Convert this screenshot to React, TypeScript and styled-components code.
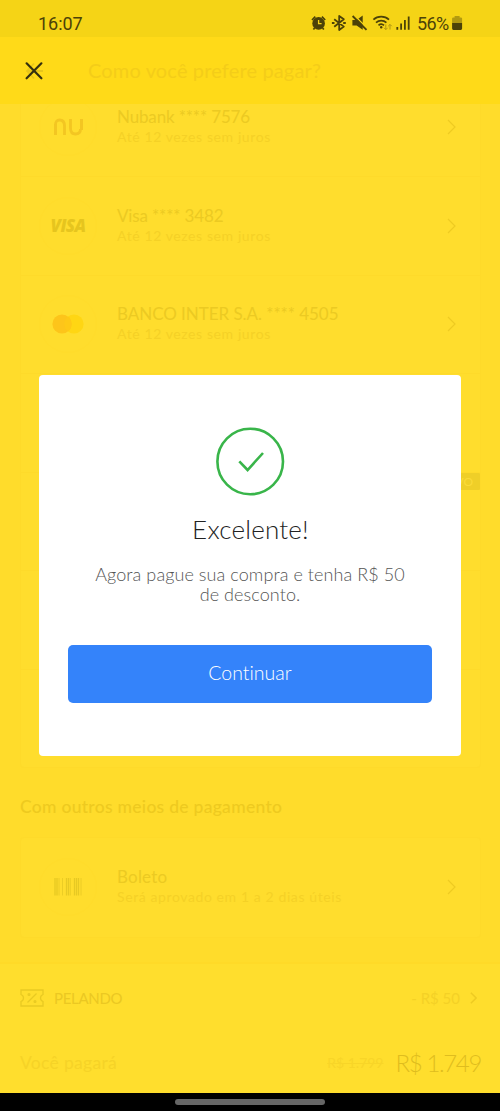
import React from 'react';
import styled, { createGlobalStyle } from 'styled-components';

const GlobalStyle = createGlobalStyle`
  * { box-sizing: border-box; }
  body { margin: 0; background: #000; font-family: Lato, "Liberation Sans", sans-serif; font-variant-ligatures: none; }
  h1, h2, p { margin: 0; font-weight: 400; }
  svg { display: block; flex: none; }
`;

const Screen = styled.div`
  position: relative;
  width: 500px;
  height: 1111px;
  display: flex;
  flex-direction: column;
  overflow: hidden;
  background: #ffdc2b;
`;

const StatusBar = styled.header`
  flex: none;
  height: 37px;
  padding: 9px 37px 0 38px;
  display: flex;
  justify-content: space-between;
  align-items: center;
  background: #f5d416;
  color: #4c4208;
  font-family: Roboto, sans-serif;
`;

const Clock = styled.span`
  font-size: 18px;
  line-height: 28px;
  padding-top: 1px;
  letter-spacing: -0.05px;
`;

const StatusIcons = styled.div`
  display: flex;
  align-items: center;
  height: 28px;
`;

const Percent = styled.span`
  width: 34px;
  margin-right: 1px;
  padding-top: 1px;
  font-size: 18px;
  line-height: 28px;
  letter-spacing: -0.6px;
`;

const TitleBar = styled.div`
  flex: none;
  height: 67px;
  padding-left: 25px;
  display: flex;
  align-items: center;
  gap: 44px;
  background: #ffda18;
`;

const PageTitle = styled.h1`
  padding-bottom: 2px;
  font-size: 20px;
  line-height: 26px;
  font-weight: 400;
  letter-spacing: 0.15px;
  color: #f4cd18;
`;

const Content = styled.main`
  flex: none;
  height: 858px;
  padding: 0 19px 0 20px;
  overflow: hidden;
`;

const Card = styled.section<{ $offset?: number }>`
  margin-top: ${(p) => p.$offset ?? 0}px;
  border: 1px solid #feda2a;
  border-radius: 4px;
  background: #ffdd2d;
`;

const Row = styled.div`
  position: relative;
  height: 98.5px;
  padding: 0 24px 0 18px;
  display: flex;
  align-items: center;
  & + & { border-top: 1px solid #feda2a; }
`;

const Logo = styled.div`
  width: 58px;
  height: 58px;
  margin-right: 20px;
  flex: none;
  display: flex;
  align-items: center;
  justify-content: center;
  border: 1px solid #ffdc2b;
  border-radius: 50%;
`;

const VisaMark = styled.span`
  font: italic 800 17px/20px "Open Sans", sans-serif;
  letter-spacing: -0.6px;
  color: #e6c51e;
`;

const RowText = styled.div`
  flex: 1;
  white-space: nowrap;
`;

const RowTitle = styled.p<{ $track?: number }>`
  font-size: 17px;
  line-height: 20px;
  letter-spacing: ${(p) => p.$track ?? -0.15}px;
  color: #ecca22;
`;

const RowNote = styled.p`
  font-size: 14px;
  line-height: 20px;
  letter-spacing: 0.6px;
  color: #f5d126;
`;

const Badge = styled.span`
  position: absolute;
  top: 0;
  right: 0;
  height: 17px;
  padding: 0 7px;
  border-radius: 1px;
  background: #efcf28;
  color: #fbdb38;
  font-size: 12px;
  line-height: 17px;
`;

const SectionTitle = styled.h2`
  margin-top: 27px;
  font-size: 17.5px;
  line-height: 24px;
  font-weight: 500;
  letter-spacing: 0.28px;
  color: #eeca1f;
`;

const Footer = styled.footer`
  flex: none;
  height: 131px;
  padding: 0 20px;
  border-top: 2px solid #ffda28;
  background: #ffde2d;
`;

const CouponRow = styled.div`
  height: 67px;
  padding-right: 3px;
  display: flex;
  align-items: center;
  color: #efcd24;
  font-size: 15px;
  line-height: 20px;
`;

const CouponName = styled.span`
  flex: 1;
  margin-left: 10px;
  letter-spacing: -0.3px;
  color: #ebc822;
`;

const CouponValue = styled.span`
  margin-right: 10px;
  color: #f4d126;
`;

const TotalRow = styled.div`
  height: 63px;
  display: flex;
  align-items: center;
`;

const TotalLabel = styled.span`
  flex: 1;
  font-size: 17.5px;
  letter-spacing: 0.3px;
  color: #f6d327;
`;

const OldPrice = styled.s`
  margin-right: 12px;
  font-size: 14px;
  color: #f8d528;
`;

const Total = styled.span`
  margin-right: -1px;
  font-size: 24px;
  line-height: 28px;
  font-weight: 300;
  letter-spacing: -1.35px;
  color: #dfbd1e;
`;

const NavBar = styled.div`
  flex: none;
  height: 18px;
  display: flex;
  justify-content: center;
  padding-top: 6px;
  background: #000;
`;

const Handle = styled.div`
  width: 150px;
  height: 6px;
  border-radius: 3px;
  background: #666;
`;

const Dialog = styled.div`
  position: absolute;
  left: 39px;
  top: 374.5px;
  width: 422px;
  height: 381px;
  padding: 52px 29px 0;
  display: flex;
  flex-direction: column;
  align-items: center;
  border-radius: 4px;
  background: #fff;
`;

const DialogTitle = styled.h2`
  margin-top: 16.5px;
  padding-left: 1px;
  font-size: 26px;
  line-height: 34px;
  font-weight: 300;
  letter-spacing: 0.2px;
  color: #222;
`;

const DialogText = styled.p`
  margin-top: 18px;
  font-size: 18px;
  line-height: 20px;
  font-weight: 300;
  letter-spacing: 0.08px;
  text-align: center;
  white-space: nowrap;
  color: #555;
`;

const Continue = styled.button`
  width: 364px;
  height: 58px;
  margin-top: 40.5px;
  padding: 0 0 1px;
  border: 0;
  border-radius: 5px;
  background: #3483fa;
  color: #fff;
  font: 300 19.5px/24px Lato, sans-serif;
  font-variant-ligatures: none;
`;

const Chevron = ({ size = 14, color = '#eecb22', width = 1.2 }) => (
  <svg width={size / 2 + 2} height={size + 2} viewBox="0 0 9 16" fill="none" stroke={color} strokeWidth={width}>
    <path d="M1 1l7 7-7 7" />
  </svg>
);

const StatusGlyphs = () => (
  <svg width="106" height="28" viewBox="311 9 106 28" fill="none" stroke="#4c4208">
    <g strokeWidth="1.7">
      <circle cx="318.6" cy="23.4" r="6.3" fill="#4c4208" stroke="none" />
      <path d="M318.6 20v3.6h3" stroke="#f5d416" strokeWidth="1.3" />
      <path d="M312 20l3.3-3.4M321.9 16.6l3.3 3.4M314.6 28l-1.2 1.5M322.6 28l1.2 1.5" />
    </g>
    <path d="M334.2 19.2l9.6 7.4-4.6 3.4V16l4.6 3.3-9.6 7.4" strokeWidth="1.8" strokeLinejoin="round" />
    <path d="M331.9 23h2.6M343.2 23h2.6" strokeWidth="2" />
    <path d="M352.4 20.1h4.2l6.1-4.5v14.2l-6.1-4.3h-4.2z" fill="#4c4208" stroke="none" />
    <path d="M354 15l14 14" stroke="#f5d416" strokeWidth="1.2" />
    <path d="M352.6 16l13.9 13.9" strokeWidth="1.9" />
    <g strokeWidth="1.7">
      <path d="M373.4 19.7c4.2-4 11.4-4 15.6 0M376 22.7c3-2.7 7.5-2.7 10.4 0M378.5 25.3c1.6-1.4 4-1.4 5.5 0" />
      <circle cx="381.2" cy="27.3" r="1.2" fill="#4c4208" stroke="none" />
    </g>
    <path d="M385.8 24.5v5M384 27.8l1.8 1.8 1.8-1.8M390 29.5v-5M388.2 26.2l1.8-1.8 1.8 1.8" stroke="#b19812" />
    <path d="M397.3 27v2.8M401.1 23.6v6.2M404.9 20v9.8M408.7 16.4v13.4" strokeWidth="1.8" />
  </svg>
);

const Battery = () => (
  <svg width="11" height="28" viewBox="452 9 11 28">
    <path d="M454.6 16h5v1.4h1.3q1.2 0 1.2 1.2V23h-10v-4.4q0-1.2 1.2-1.2h1.3z" fill="#b29a10" />
    <path d="M452.1 23h10v5.6q0 1.3-1.3 1.3h-7.4q-1.3 0-1.3-1.3z" fill="#4c4208" />
  </svg>
);

const CloseIcon = () => (
  <svg width="19" height="20" viewBox="0 0 19 20" fill="none">
    <path d="M2 10h16M9 2.5L2 10l7 7.5" stroke="#e9c71a" strokeWidth="1.8" />
    <path d="M1.6 2.3l14.8 15M16.4 2.3L1.6 17.3" stroke="#35300f" strokeWidth="2.2" strokeLinecap="round" />
  </svg>
);

const NuMark = () => (
  <svg width="30" height="18" viewBox="0 0 30 18" fill="none" stroke="#f3c622">
    <path d="M2.5 17V6M28.5 1v11" strokeWidth="3" />
    <path d="M2.5 7q0-5 4-5 5 0 5 6v9M17.5 1v9q0 6 5 6 5 0 5-5" strokeWidth="2.8" />
  </svg>
);

const CardCircles = () => (
  <svg width="32" height="20" viewBox="0 0 32 20">
    <circle cx="22" cy="10" r="9.6" fill="#ffd613" />
    <circle cx="10" cy="10" r="9.6" fill="#fdc51a" />
    <path d="M16 2.5a9.6 9.6 0 0 1 0 15a9.6 9.6 0 0 1 0-15z" fill="#fec916" />
  </svg>
);

const Barcode = () => (
  <svg width="28" height="18" viewBox="0 0 28 18" stroke="#e7c923">
    <path d="M1 0v17.5M3 0v17.5M12.5 0v17.5M14.5 0v17.5M20.5 0v17.5M22.5 0v17.5M24.5 0v17.5" strokeWidth="1.3" />
    <path d="M5 0v17.5M8.5 0v17.5M16.3 0v17.5M27 0v17.5" strokeWidth=".8" />
  </svg>
);

const Ticket = () => (
  <svg width="24" height="18" viewBox="0 0 24 18" fill="none" stroke="#e9ca22" strokeWidth="1.3">
    <path d="M1 1h22v4.5q-2.5 1-2.5 3.5t2.5 3.5V17H1v-4.5q2.5-1 2.5-3.5T1 5.500zM7.500 13.500l9-9" />
    <circle cx="9" cy="5.5" r=".9" />
    <circle cx="15" cy="12.5" r=".9" />
  </svg>
);

const CheckBadge = () => (
  <svg width="69" height="69" viewBox="0 0 69 69" fill="none" stroke="#39b54a" strokeWidth="2.6">
    <circle cx="34.200" cy="34.500" r="32.800" />
    <path d="M23.300 34.300l8.300 8.700L47 26" />
  </svg>
);

type MethodProps = { logo: React.ReactNode; title: string; note: string; track?: number };

const Method = ({ logo, title, note, track }: MethodProps) => (
  <Row>
    <Logo>{logo}</Logo>
    <RowText>
      <RowTitle $track={track}>{title}</RowTitle>
      <RowNote>{note}</RowNote>
    </RowText>
    <Chevron />
  </Row>
);

export default function App() {
  return (
    <Screen>
      <GlobalStyle />
      <StatusBar>
        <Clock>16:07</Clock>
        <StatusIcons>
          <StatusGlyphs />
          <Percent>56%</Percent>
          <Battery />
        </StatusIcons>
      </StatusBar>
      <TitleBar>
        <CloseIcon />
        <PageTitle>Como você prefere pagar?</PageTitle>
      </TitleBar>
      <Content>
        <Card $offset={-27.5}>
          <Method logo={<NuMark />} title="Nubank **** 7576" note="Até 12 vezes sem juros" />
          <Method logo={<VisaMark>VISA</VisaMark>} title="Visa **** 3482" note="Até 12 vezes sem juros" />
          <Method logo={<CardCircles />} title="BANCO INTER S.A. **** 4505" note="Até 12 vezes sem juros" track={-0.05} />
          <Row />
          <Row><Badge>NOVO</Badge></Row>
          <Row />
          <Row />
        </Card>
        <SectionTitle>Com outros meios de pagamento</SectionTitle>
        <Card $offset={18}>
          <Method logo={<Barcode />} title="Boleto" note="Será aprovado em 1 a 2 dias úteis" track={0.2} />
        </Card>
      </Content>
      <Footer>
        <CouponRow>
          <Ticket />
          <CouponName>PELANDO</CouponName>
          <CouponValue>- R$ 50</CouponValue>
          <Chevron size={10} width={2} />
        </CouponRow>
        <TotalRow>
          <TotalLabel>Você pagará</TotalLabel>
          <OldPrice>R$ 1.799</OldPrice>
          <Total>R$ 1.749</Total>
        </TotalRow>
      </Footer>
      <NavBar><Handle /></NavBar>
      <Dialog role="dialog">
        <CheckBadge />
        <DialogTitle>Excelente!</DialogTitle>
        <DialogText>Agora pague sua compra e tenha R$ 50<br />de desconto.</DialogText>
        <Continue>Continuar</Continue>
      </Dialog>
    </Screen>
  );
}
